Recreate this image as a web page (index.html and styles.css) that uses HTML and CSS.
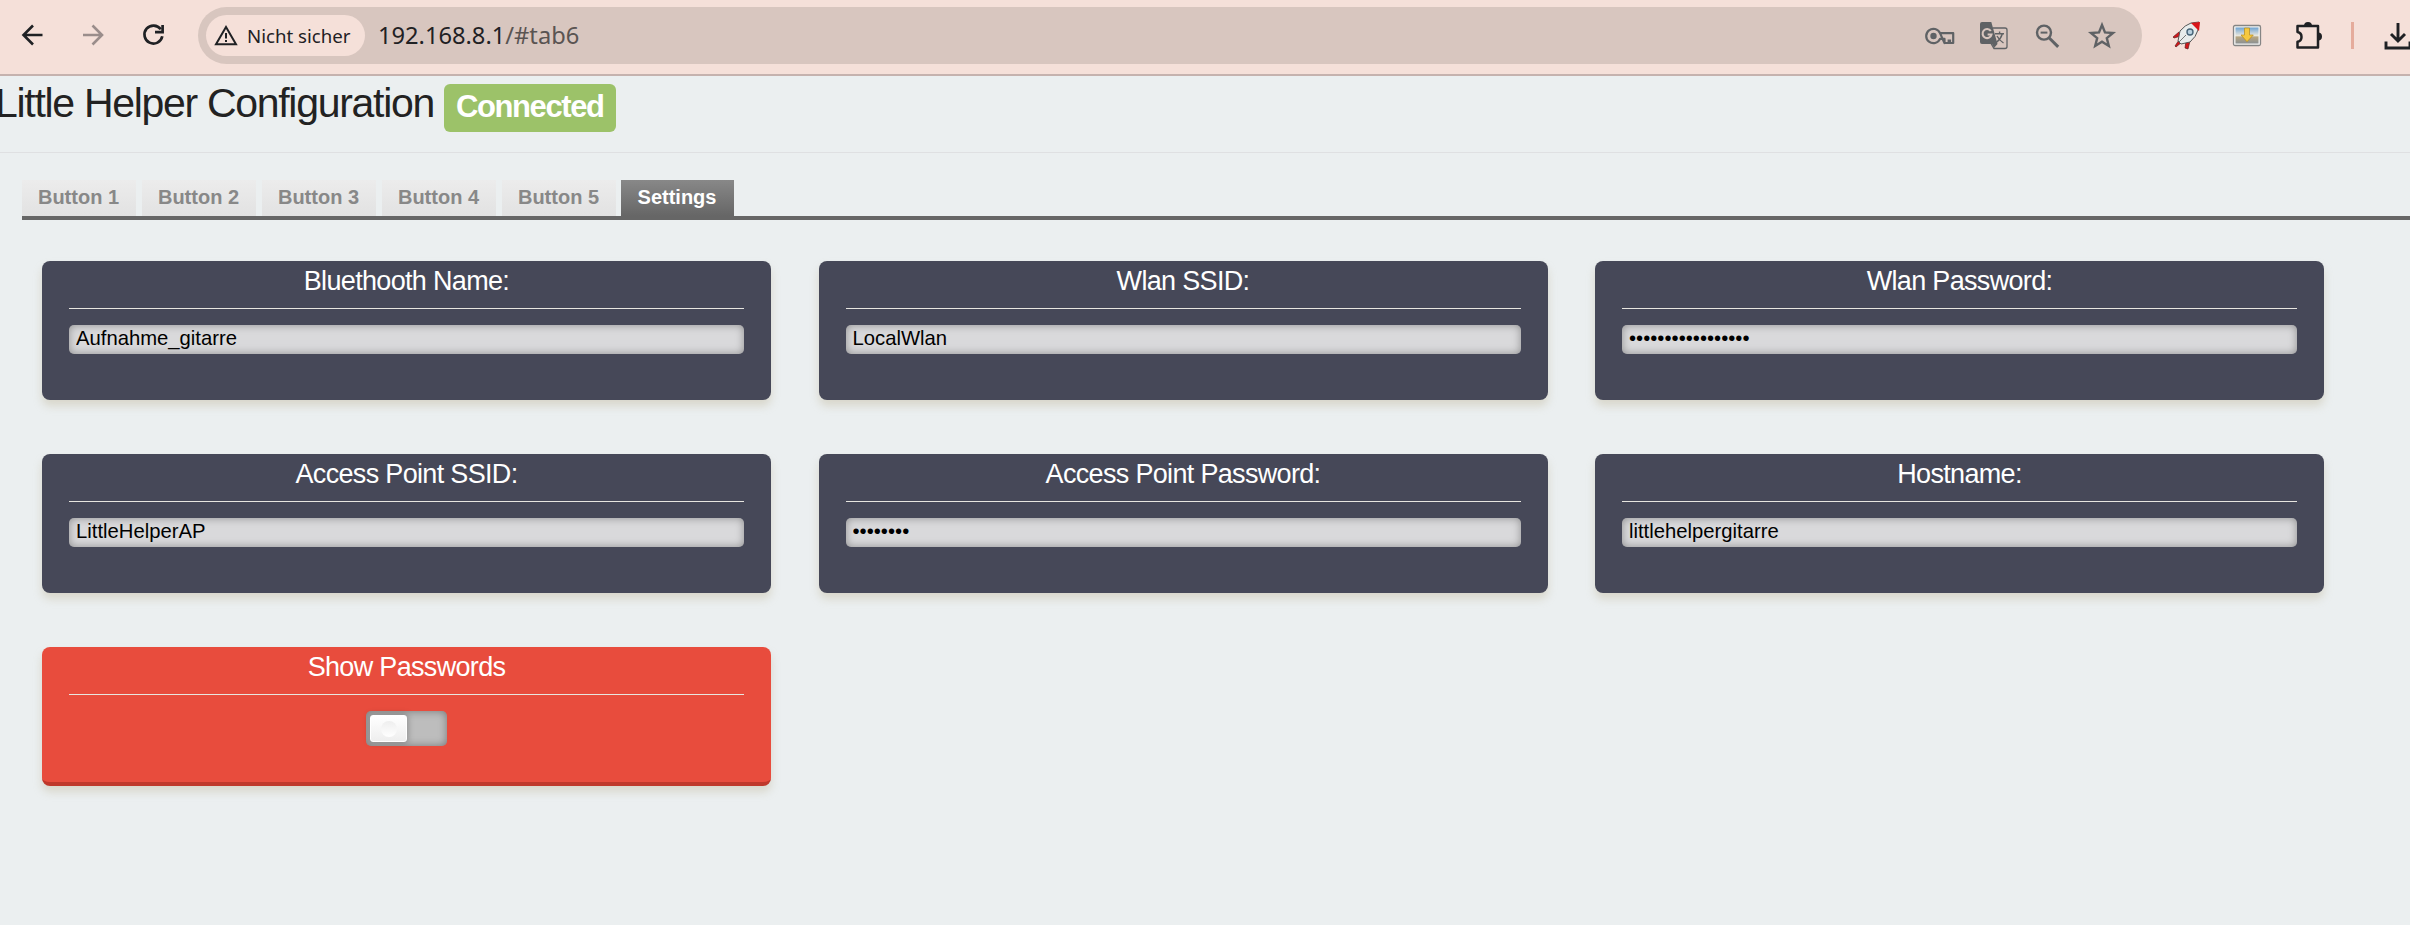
FILE: index.html
```html
<!DOCTYPE html>
<html lang="de">
<head>
<meta charset="utf-8">
<title>Little Helper Configuration</title>
<link rel="stylesheet" href="styles.css">
</head>
<body>
<header class="toolbar">
  <nav class="nav">
    <svg class="icon" width="28" height="28" viewBox="0 0 28 28"><path d="M24.500 14H5.500M15 4.500L5.500 14l9.500 9.500" fill="none" stroke="#1f2124" stroke-width="2.600"/></svg>
    <svg class="icon" width="28" height="28" viewBox="0 0 28 28"><path d="M4 14h19M13.500 4.500L23 14l-9.500 9.500" fill="none" stroke="#9a8d8b" stroke-width="2.600"/></svg>
    <svg class="icon" width="28" height="28" viewBox="0 0 28 28"><path d="M20.800 8.300A9 9 0 1 0 22.300 15.300" fill="none" stroke="#1f2124" stroke-width="2.700"/><path d="M22.600 4v7.200H15" fill="none" stroke="#1f2124" stroke-width="2.700"/></svg>
  </nav>
  <div class="omnibox">
    <div class="security">
      <svg width="26" height="24" viewBox="0 0 26 24"><path d="M13 4L3 21.300h20z" fill="none" stroke="#1f2124" stroke-width="2"/><path d="M13 10v5.500M13 17v2" stroke="#1f2124" stroke-width="2"/></svg>
      <span>Nicht sicher</span>
    </div>
    <div class="url">192.168.8.1<span class="url-path">/#tab6</span></div>
    <div class="actions">
      <svg width="32" height="30" viewBox="0 0 32 30"><path d="M16 12.100H29.200V22H26V18.500M24.700 22V18.500M20.500 22H29.200M20.500 22V17.900H16A7.200 7.200 0 1 1 16 12.100z" fill="none" stroke="#5f6265" stroke-width="2.200" stroke-linejoin="round"/><circle cx="9.500" cy="15" r="3.200" fill="#5f6265"/></svg>
      <svg width="30" height="30" viewBox="0 0 30 30"><path d="M13.500 7H26q2 0 2 2V25.500q0 2-2 2H15l-3-5" fill="none" stroke="#5f6265" stroke-width="1.300"/><path d="M3 1h9.300l6.200 22-3.500 4-2-4H3q-2 0-2-2V3q0-2 2-2z" fill="#5f6265"/><path d="M11.800 10A4.500 4.500 0 1 0 12.500 13.500H8.600" fill="none" stroke="#d8c6bf" stroke-width="2.100"/><path d="M16 12.700h9M20.600 10.500v2M23.300 13q-1.500 5-6 8.500M18 15q2.500 4.500 6.500 7" fill="none" stroke="#5f6265" stroke-width="1.400"/></svg>
      <svg width="28" height="28" viewBox="0 0 28 28"><circle cx="11" cy="10.600" r="7" fill="none" stroke="#5f6265" stroke-width="2.400"/><path d="M16 15.700l9.200 9.200" stroke="#5f6265" stroke-width="3"/><path d="M7.600 10.600h6.800" stroke="#5f6265" stroke-width="2"/></svg>
      <svg class="star" width="30" height="30" viewBox="0 0 30 30"><path d="M15 4l3 7.400 8 .6-6.200 5.100 2 7.900-6.800-4.300L8.200 25l2-7.900L4 12l8-.6z" fill="none" stroke="#5f6265" stroke-width="2.400"/></svg>
    </div>
  </div>
  <div class="extensions">
    <svg width="30" height="30" viewBox="0 0 30 30"><path d="M8 11L2 16l1 1 7-2zM19 20l-2 8-3-1 1-7zM8 19l-4 6 1 1 6-5z" fill="#d3161a" stroke="#5a2020" stroke-width=".7"/><path d="M7 20L9 10Q14 4 20 2L28 1 27 9Q25 16 19 21L10 23z" fill="#e8eceb" stroke="#555" stroke-width="1"/><path d="M20 2L29 1 28 10z" fill="#d91419"/><circle cx="19" cy="11" r="3" fill="#b8d0de" stroke="#476478" stroke-width="1.400"/><path d="M8 21l7-7" stroke="#777" stroke-width="1"/></svg>
    <svg width="30" height="24" viewBox="0 0 30 24"><defs><linearGradient id="sky" x2="0" y2="1"><stop stop-color="#6fa3d2"/><stop offset=".5" stop-color="#e7e6dc"/><stop offset=".6" stop-color="#b6a580"/><stop offset="1" stop-color="#8b9093"/></linearGradient></defs><rect x="1.500" y="1.500" width="27" height="20" rx="1.500" fill="#f4f4f2" stroke="#858585" stroke-width="1.300"/><rect x="3.500" y="3.500" width="23" height="16" fill="url(#sky)"/><path d="M12.500 4h5v7h3.800L15 17.700 9 11h3.500z" fill="#f5c83e" stroke="#b68a18" stroke-width=".7"/></svg>
    <svg width="30" height="30" viewBox="0 0 30 30"><path d="M4.500 5H25V26.500H4.500V20.800A5 5 0 0 0 4.500 11z" fill="none" stroke="#1f2124" stroke-width="2.500" stroke-linejoin="round"/><path d="M11 5a4 4 0 0 1 8 0zM25 11.500a4 4 0 0 1 0 8z" fill="#1f2124"/></svg>
    <span class="divider"></span>
    <svg class="download" width="30" height="30" viewBox="0 0 30 30"><path d="M15 2v17M8 13l7 7 7-7M3 20.500V27H27V20.500" fill="none" stroke="#1f2124" stroke-width="2.900"/></svg>
  </div>
</header>

<main>
  <div class="title-bar">
    <h1 class="title">Little Helper Configuration</h1>
    <span class="status">Connected</span>
  </div>
  <ul class="tabs">
    <li class="tab">Button 1</li>
    <li class="tab">Button 2</li>
    <li class="tab">Button 3</li>
    <li class="tab">Button 4</li>
    <li class="tab">Button 5</li>
    <li class="tab active">Settings</li>
  </ul>
  <section class="cards">
    <div class="card"><h5>Bluethooth Name:</h5><input type="text" value="Aufnahme_gitarre"></div>
    <div class="card"><h5>Wlan SSID:</h5><input type="text" value="LocalWlan"></div>
    <div class="card"><h5>Wlan Password:</h5><input type="password" value="00000000000000000"></div>
    <div class="card"><h5>Access Point SSID:</h5><input type="text" value="LittleHelperAP"></div>
    <div class="card"><h5>Access Point Password:</h5><input type="password" value="00000000"></div>
    <div class="card"><h5>Hostname:</h5><input type="text" value="littlehelpergitarre"></div>
    <div class="card alert"><h5>Show Passwords</h5><div class="switch"><span class="knob"></span></div></div>
  </section>
</main>
</body>
</html>
```
FILE: styles.css
```css
* { box-sizing: border-box; }
body {
  margin: 0;
  height: 925px;
  overflow: hidden;
  background: #ebeff0;
  color: #222;
  font-family: "Liberation Sans", Arial, sans-serif;
}
svg { display: block; flex: none; }

.toolbar {
  display: flex;
  align-items: flex-start;
  height: 76px;
  padding-top: 7px;
  overflow: hidden;
  background: #f5e0d9;
  border-bottom: 2px solid #c5b2ae;
  font-family: "Noto Sans", sans-serif;
}
.nav {
  display: flex;
  flex: none;
  gap: 33px;
  width: 198px;
  padding: 14px 0 0 18px;
}
.omnibox {
  display: flex;
  flex: none;
  align-items: center;
  width: 1944px;
  height: 57px;
  padding: 0 25px 0 8px;
  border-radius: 29px;
  background: #d8c6bf;
}
.security {
  display: flex;
  align-items: center;
  gap: 8px;
  width: 159px;
  height: 41px;
  padding: 0 0 1px 7px;
  border-radius: 21px;
  background: #f5e0d9;
  color: #1f2124;
  font-size: 18.67px;
  white-space: nowrap;
}
.url {
  flex: 1;
  padding: 0 0 1px 13px;
  color: #1f2124;
  font-size: 23.67px;
}
.url-path { color: #5a5452; }
.actions {
  display: flex;
  align-items: center;
  gap: 23.500px;
}
.actions .star { margin-left: 3px; }
.extensions {
  display: flex;
  flex: none;
  align-items: center;
  height: 57px;
  padding-left: 29px;
}
.extensions svg + svg { margin-left: 31px; }
.divider {
  width: 3px;
  height: 27px;
  margin: 0 29px 0 28px;
  background: #e5ac9c;
}

.title-bar {
  display: flex;
  align-items: flex-start;
  height: 77px;
  padding-top: 8px;
  border-bottom: 1px solid #dfe0e2;
}
.title {
  flex: none;
  width: 439px;
  margin: -5px 10px 0 -5px;
  font-size: 41px;
  font-weight: 400;
  line-height: 48px;
  letter-spacing: -1.3px;
  white-space: nowrap;
}
.status {
  width: 172px;
  height: 48px;
  padding-left: 12px;
  border-radius: 6px;
  background: #9cc269;
  color: #fff;
  font-size: 31px;
  font-weight: 700;
  line-height: 45px;
  letter-spacing: -1.4px;
}

.tabs {
  display: flex;
  gap: 6px;
  height: 40px;
  margin: 27px 0 0 22px;
  padding: 0;
  border-bottom: 4px solid #666;
  list-style: none;
}
.tab {
  width: 114px;
  height: 36px;
  padding-right: 1px;
  background: linear-gradient(#ececec, #e2e2e2);
  color: #888;
  font-size: 20px;
  font-weight: 700;
  line-height: 34px;
  text-align: center;
  white-space: nowrap;
}
.tab.active {
  width: 113px;
  margin-left: -1px;
  background: linear-gradient(#888, #666);
  color: #fff;
}

.cards {
  display: grid;
  grid-template-columns: repeat(3, 729px);
  grid-auto-rows: 139px;
  gap: 54px 47.5px;
  padding: 41px 0 0 42px;
}
.card {
  padding: 0 27px;
  border-radius: 8px;
  background: #464858;
  box-shadow: 0 6px 9px rgba(190, 180, 150, .4);
  text-align: center;
}
.card.alert {
  background: #e84c3d;
  border-bottom: 4px solid #bf382b;
}
.card h5 {
  height: 48px;
  margin: 0 0 16px;
  border-bottom: 1px solid #e8e6e0;
  color: #fff;
  font-size: 27px;
  font-weight: 400;
  line-height: 40px;
  letter-spacing: -.67px;
}
.card input {
  display: block;
  width: 100%;
  height: 29px;
  margin: 0;
  padding: 0 7px 2px;
  border: 0;
  border-radius: 5px;
  background: #d9d9db;
  box-shadow: inset 0 0 8px rgba(0, 0, 0, .35);
  color: #000;
  font: 20.25px "Liberation Sans", Arial, sans-serif;
}
.switch {
  width: 81px;
  height: 35px;
  margin: 0 auto;
  padding: 4px;
  border-radius: 5px;
  background: #bdbdbd;
  box-shadow: inset 0 0 9px rgba(0, 0, 0, .38);
}
.knob {
  display: flex;
  align-items: center;
  justify-content: center;
  width: 37px;
  height: 27px;
  border: 1px solid #fff;
  border-radius: 3px;
  background: linear-gradient(#fff, #eee);
  box-shadow: 0 0 6px 1px rgba(0, 0, 0, .25);
}
.knob::after {
  content: "";
  width: 16px;
  height: 16px;
  border-radius: 50%;
  background: linear-gradient(#eee, #fff);
}
```
